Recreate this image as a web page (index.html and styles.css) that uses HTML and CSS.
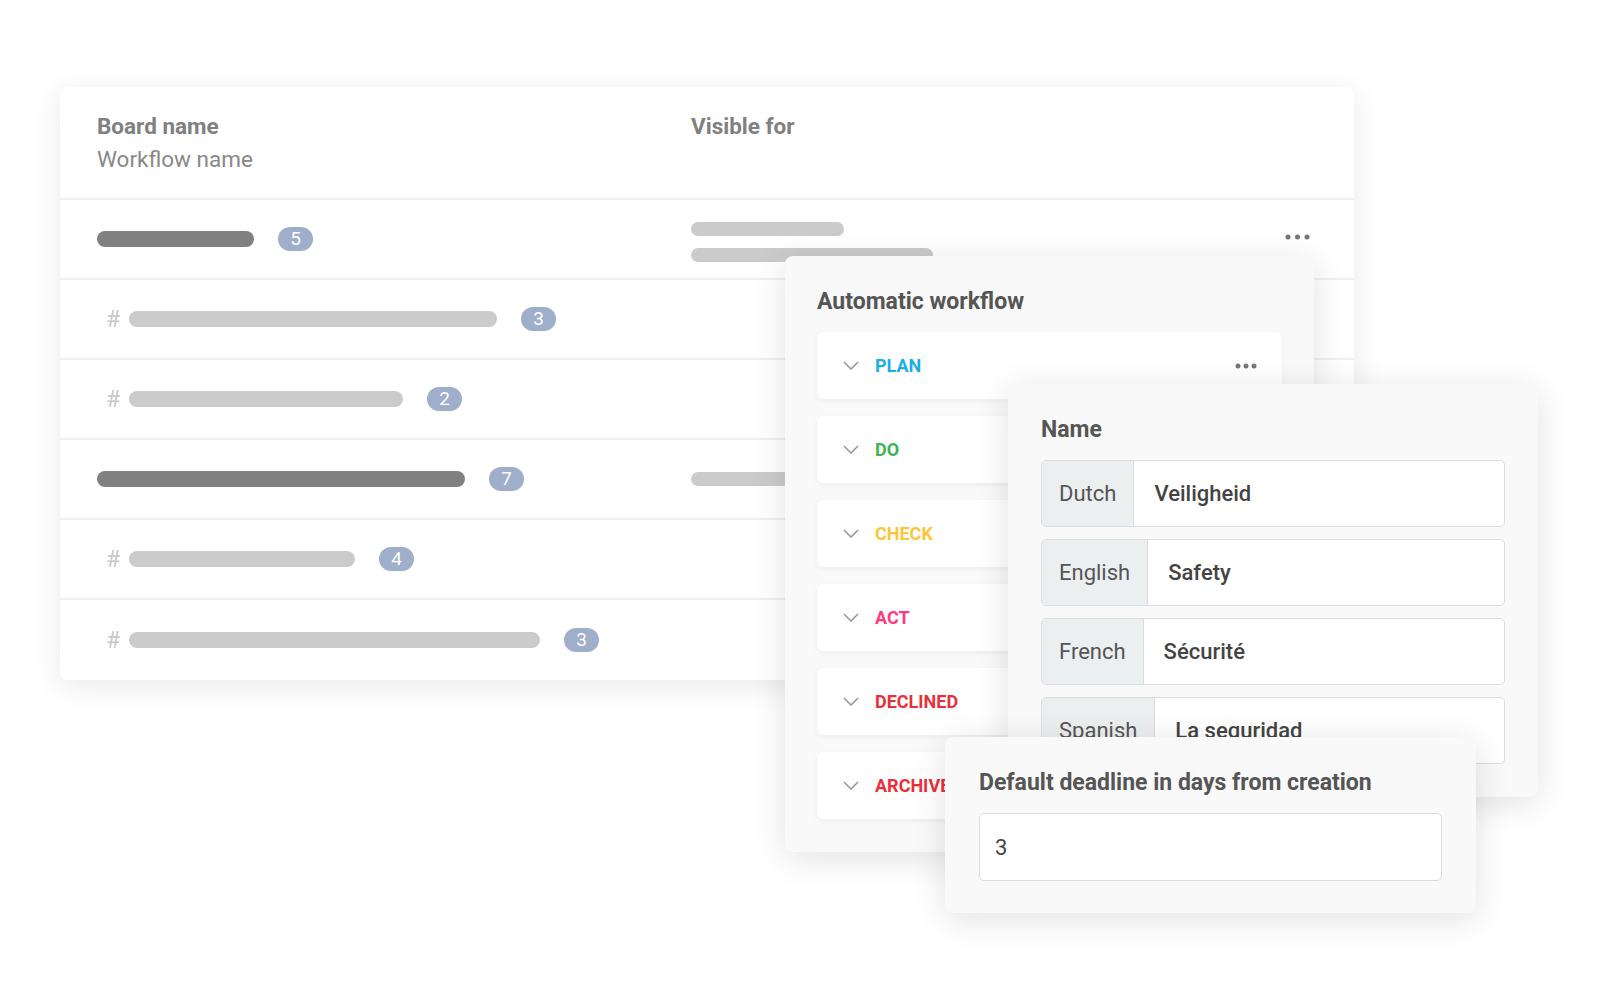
FILE: index.html
```html
<!DOCTYPE html>
<html lang="en">
<head>
    <meta charset="UTF-8">
    <meta name="viewport" content="width=device-width, initial-scale=1.0">
    <title>Boards</title>
    <link rel="stylesheet" href="styles.css">
</head>
<body>
    <div class="stage">
        <section class="board-card">
            <div class="board-head">
                <div>
                    <div class="head-title">Board name</div>
                    <div class="head-sub">Workflow name</div>
                </div>
                <div>
                    <div class="head-title">Visible for</div>
                </div>
            </div>

            <div class="board-row">
                <div class="col-name">
                    <span class="bar bar-dark" style="width:157px"></span>
                    <span class="count">5</span>
                </div>
                <div class="col-visible stack">
                    <span class="bar bar-light thin" style="width:153px"></span>
                    <span class="bar bar-light thin" style="width:242px"></span>
                </div>
                <div class="col-menu">
                    <svg class="dots" width="25" height="6" viewBox="0 0 25 6"><circle cx="3" cy="3" r="2.5"/><circle cx="12.5" cy="3" r="2.5"/><circle cx="22" cy="3" r="2.5"/></svg>
                </div>
            </div>

            <div class="board-row">
                <div class="col-name">
                    <span class="topic"><span class="hash">#</span><span class="bar bar-light" style="width:368px"></span></span>
                    <span class="count">3</span>
                </div>
                <div class="col-visible"></div>
                <div class="col-menu"></div>
            </div>

            <div class="board-row">
                <div class="col-name">
                    <span class="topic"><span class="hash">#</span><span class="bar bar-light" style="width:274px"></span></span>
                    <span class="count">2</span>
                </div>
                <div class="col-visible"></div>
                <div class="col-menu"></div>
            </div>

            <div class="board-row">
                <div class="col-name">
                    <span class="bar bar-dark" style="width:368px"></span>
                    <span class="count">7</span>
                </div>
                <div class="col-visible">
                    <span class="bar bar-light thin" style="width:200px"></span>
                </div>
                <div class="col-menu"></div>
            </div>

            <div class="board-row">
                <div class="col-name">
                    <span class="topic"><span class="hash">#</span><span class="bar bar-light" style="width:226px"></span></span>
                    <span class="count">4</span>
                </div>
                <div class="col-visible"></div>
                <div class="col-menu"></div>
            </div>

            <div class="board-row">
                <div class="col-name">
                    <span class="topic"><span class="hash">#</span><span class="bar bar-light" style="width:411px"></span></span>
                    <span class="count">3</span>
                </div>
                <div class="col-visible"></div>
                <div class="col-menu"></div>
            </div>
        </section>

        <!-- settings windows stacked over the board list -->
        <div class="panel workflow-panel">
            <div class="panel-title">Automatic workflow</div>
            <div class="step">
                <svg class="chevron" width="16" height="9" viewBox="0 0 16 9"><polyline points="1,1 8,8 15,1"/></svg>
                <span class="step-label plan">PLAN</span>
                <svg class="dots" width="22" height="6" viewBox="0 0 22 6"><circle cx="3" cy="3" r="2.5"/><circle cx="11" cy="3" r="2.5"/><circle cx="19" cy="3" r="2.5"/></svg>
            </div>
            <div class="step">
                <svg class="chevron" width="16" height="9" viewBox="0 0 16 9"><polyline points="1,1 8,8 15,1"/></svg>
                <span class="step-label do">DO</span>
            </div>
            <div class="step">
                <svg class="chevron" width="16" height="9" viewBox="0 0 16 9"><polyline points="1,1 8,8 15,1"/></svg>
                <span class="step-label check">CHECK</span>
            </div>
            <div class="step">
                <svg class="chevron" width="16" height="9" viewBox="0 0 16 9"><polyline points="1,1 8,8 15,1"/></svg>
                <span class="step-label act">ACT</span>
            </div>
            <div class="step">
                <svg class="chevron" width="16" height="9" viewBox="0 0 16 9"><polyline points="1,1 8,8 15,1"/></svg>
                <span class="step-label declined">DECLINED</span>
            </div>
            <div class="step">
                <svg class="chevron" width="16" height="9" viewBox="0 0 16 9"><polyline points="1,1 8,8 15,1"/></svg>
                <span class="step-label declined">ARCHIVED</span>
            </div>
        </div>

        <div class="panel name-panel">
            <div class="panel-title">Name</div>
            <div class="lang-field">
                <span class="lang-label">Dutch</span>
                <span class="lang-value">Veiligheid</span>
            </div>
            <div class="lang-field">
                <span class="lang-label">English</span>
                <span class="lang-value">Safety</span>
            </div>
            <div class="lang-field">
                <span class="lang-label">French</span>
                <span class="lang-value">Sécurité</span>
            </div>
            <div class="lang-field">
                <span class="lang-label">Spanish</span>
                <span class="lang-value">La seguridad</span>
            </div>
        </div>

        <div class="panel deadline-panel">
            <div class="panel-title">Default deadline in days from creation</div>
            <div class="deadline-input">3</div>
        </div>
    </div>
</body>
</html>
```

FILE: styles.css
```css
body {
    margin: 0;
    background-color: #fff;
    font-family: Roboto, "Noto Sans", Arial, sans-serif;
}

.stage {
    position: relative;
    width: 1600px;
    height: 1000px;
    padding: 87px 0 0 60px;
    box-sizing: border-box;
    overflow: hidden;
}

/* board list */

.board-card {
    width: 1294px;
    background-color: #fff;
    border-radius: 8px;
    box-shadow: 0 6px 30px rgba(0, 0, 0, 0.09);
}

.board-head {
    display: grid;
    grid-template-columns: 594px 1fr;
    height: 113px;
    box-sizing: border-box;
    padding: 23px 44px 0 37px;
    border-bottom: 2px solid #f0f0f0;
}

.head-title {
    font-size: 22.5px;
    line-height: 33px;
    font-weight: 700;
    color: #808080;
}

.head-sub {
    font-size: 22.5px;
    line-height: 33px;
    color: #888;
}

.board-row {
    display: grid;
    grid-template-columns: 594px 1fr auto;
    align-items: center;
    height: 80px;
    box-sizing: border-box;
    padding: 0 44px 0 37px;
    border-bottom: 2px solid #f0f0f0;
}

.board-row:last-child {
    border-bottom: none;
}

.col-name {
    display: flex;
    align-items: center;
    gap: 24px;
}

.topic {
    display: flex;
    align-items: center;
}

.hash {
    width: 32px;
    text-align: center;
    font-size: 23px;
    color: #c8c8c8;
}

.stack {
    display: flex;
    flex-direction: column;
    gap: 12px;
    padding-top: 6px;
}

.bar {
    display: block;
    height: 16px;
    border-radius: 8px;
}

.bar.thin {
    height: 14px;
}

.bar-dark {
    background-color: #808080;
}

.bar-light {
    background-color: #cbcbcb;
}

.count {
    width: 35px;
    height: 24px;
    line-height: 24px;
    border-radius: 12px;
    background-color: #9eaecb;
    color: #fff;
    font-size: 19px;
    text-align: center;
}

.col-menu {
    display: flex;
    align-items: center;
    margin-bottom: 4px;
}

.dots {
    fill: #777;
}

/* floating windows */

.panel {
    position: absolute;
    box-sizing: border-box;
    background-color: #f9f9f9;
    border-radius: 8px;
    box-shadow: 0 6px 34px rgba(0, 0, 0, 0.12);
    padding: 29px 32px 33px;
}

.panel-title {
    font-size: 23px;
    line-height: 33px;
    font-weight: 700;
    color: #555;
    margin-bottom: 14px;
}

.workflow-panel {
    left: 785px;
    top: 256px;
    width: 529px;
}

.name-panel {
    left: 1008px;
    top: 384px;
    width: 530px;
    padding: 29px 33px 33px;
}

.deadline-panel {
    left: 945px;
    top: 737px;
    width: 531px;
    padding: 29px 34px 32px;
}

.step {
    display: flex;
    align-items: center;
    height: 67px;
    margin-bottom: 17px;
    padding: 0 25px 0 26px;
    background-color: #fff;
    border-radius: 6px;
    box-shadow: 0 2px 6px rgba(0, 0, 0, 0.05);
}

.step:last-child {
    margin-bottom: 0;
}

.chevron {
    fill: none;
    stroke: #9a9a9a;
    stroke-width: 1.6;
    margin-right: 16px;
}

.step-label {
    flex: 1;
    font-size: 18px;
    font-weight: 700;
}

.plan { color: #1aaee3; }
.do { color: #3fb34f; }
.check { color: #fcc63c; }
.act { color: #ff3b7f; }
.declined { color: #e9303a; }

.lang-field {
    display: flex;
    height: 67px;
    box-sizing: border-box;
    margin-bottom: 12px;
    background-color: #fff;
    border: 1px solid #dcdcdc;
    border-radius: 5px;
    overflow: hidden;
}

.lang-field:last-child {
    margin-bottom: 0;
}

.lang-label {
    display: flex;
    align-items: center;
    padding: 0 17px;
    background-color: #eceff0;
    border-right: 1px solid #dcdcdc;
    font-size: 22px;
    color: #555;
}

.lang-value {
    display: flex;
    align-items: center;
    padding-left: 20px;
    font-size: 22px;
    font-weight: 500;
    color: #444;
}

.deadline-input {
    display: flex;
    align-items: center;
    height: 68px;
    box-sizing: border-box;
    padding-left: 15px;
    background-color: #fff;
    border: 1px solid #dcdcdc;
    border-radius: 5px;
    font-size: 22px;
    color: #444;
}
```
